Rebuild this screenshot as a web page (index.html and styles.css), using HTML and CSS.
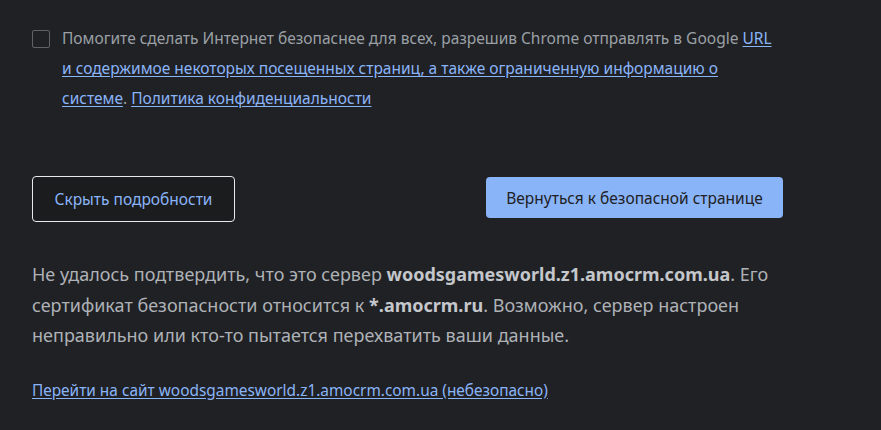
FILE: index.html
```html
<!DOCTYPE html>
<html lang="ru">
<head>
<meta charset="utf-8">
<title>Ошибка сертификата</title>
<link rel="stylesheet" href="styles.css">
</head>
<body>
<div class="page">
  <div class="optin">
    <span class="checkbox"></span>
    <p class="optin-text">Помогите сделать Интернет безопаснее для всех, разрешив Chrome отправлять в Google <a href="#">URL<br>и содержимое некоторых посещенных страниц, а также ограниченную информацию о<br>системе</a>. <a href="#">Политика конфиденциальности</a></p>
  </div>
  <div class="buttons">
    <button class="btn btn-secondary">Скрыть подробности</button>
    <button class="btn btn-primary">Вернуться к безопасной странице</button>
  </div>
  <p class="details">Не удалось подтвердить, что это сервер <b>woodsgamesworld.z1.amocrm.com.ua</b>. Его<br>сертификат безопасности относится к <b>*.amocrm.ru</b>. Возможно, сервер настроен<br>неправильно или кто-то пытается перехватить ваши данные.</p>
  <p class="proceed"><a href="#">Перейти на сайт woodsgamesworld.z1.amocrm.com.ua (небезопасно)</a></p>
</div>
</body>
</html>
```
FILE: styles.css
```css
html, body {
  margin: 0;
  padding: 0;
  background: #202124;
}
body {
  font-family: "Noto Sans", "Open Sans", sans-serif;
  color: #bdc1c6;
}
.page {
  width: 751px;
  padding: 23px 0 0 32px;
}
a {
  color: #8ab4f8;
  text-decoration: underline;
  text-underline-offset: 2px;
}
.optin {
  display: flex;
  align-items: flex-start;
  gap: 12px;
}
.checkbox {
  flex: none;
  width: 16px;
  height: 16px;
  margin-top: 7px;
  border: 1px solid #5f6368;
  border-radius: 2px;
}
.optin-text {
  margin: 0;
  font-size: 15.5px;
  line-height: 30px;
  color: #9aa0a6;
}
.buttons {
  display: flex;
  justify-content: space-between;
  align-items: flex-start;
  margin-top: 63px;
}
.btn {
  font-family: inherit;
  font-size: 15.5px;
  border-radius: 4px;
  cursor: pointer;
}
.btn-secondary {
  width: 203px;
  height: 46px;
  background: #1b1c1e;
  color: #8ab4f8;
  border: 1px solid #e8eaed;
  box-shadow: 0 0 0 1px #202124;
}
.btn-primary {
  width: 297px;
  height: 41px;
  margin-top: 1px;
  background: #8ab4f8;
  color: #202124;
  border: none;
}
.details {
  margin: 37px 0 0;
  font-size: 18px;
  line-height: 30.5px;
  color: #aeb2b7;
}
.details b {
  color: #c4c7cb;
}
.proceed {
  margin: 30px 0 0;
  font-size: 15.4px;
  line-height: 20px;
}
```
